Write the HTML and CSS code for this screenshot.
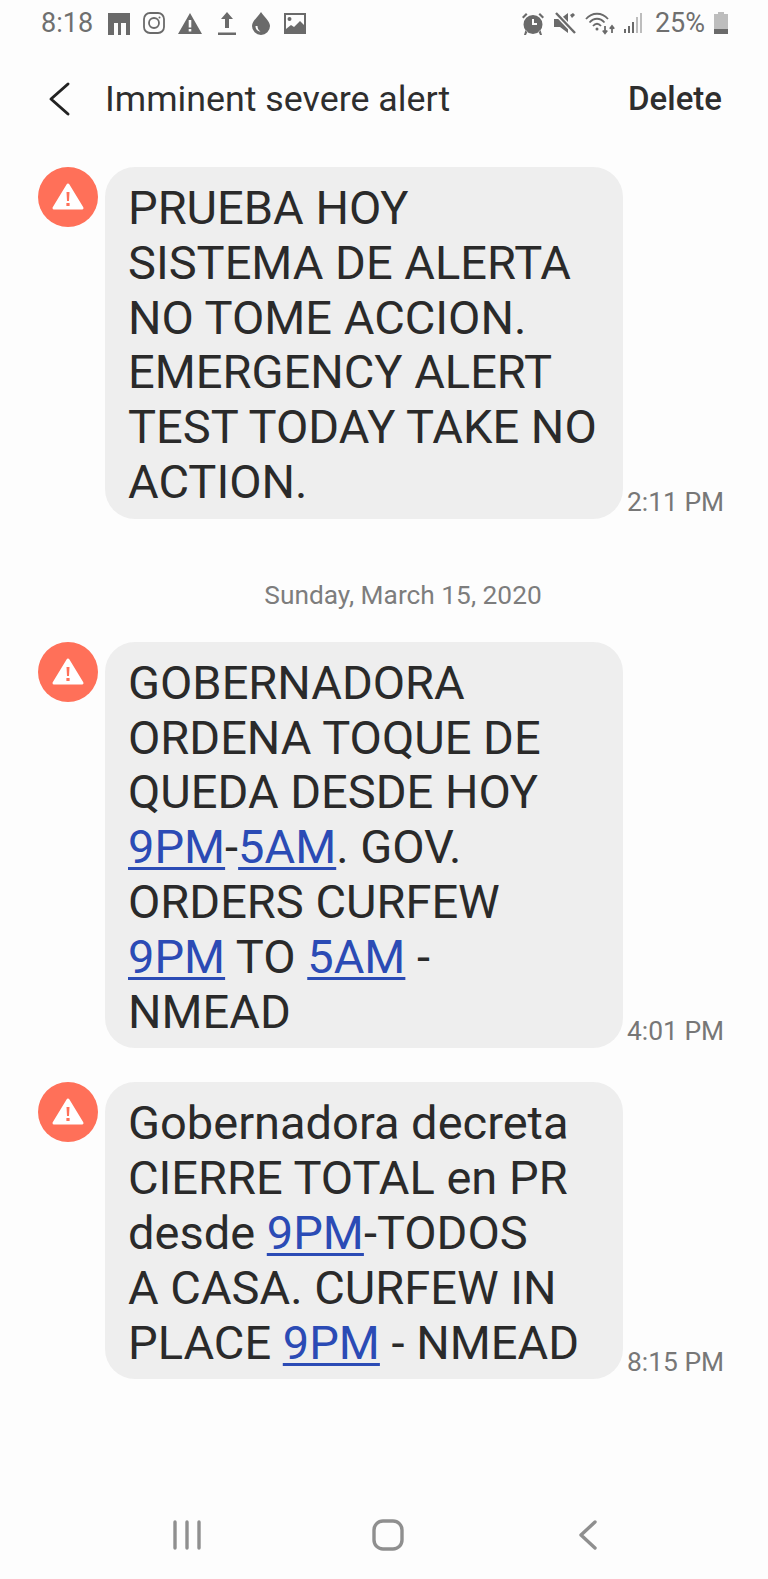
FILE: index.html
```html
<!DOCTYPE html>
<html lang="en">
<head>
<meta charset="utf-8">
<title>Imminent severe alert</title>
<link rel="stylesheet" href="styles.css">
</head>
<body>
<div class="screen">
  <div class="status">
    <div class="status-left">
      <span class="clock">8:18</span>
      <svg class="si" width="24" height="24" viewBox="0 0 24 24"><path class="f" fill-rule="evenodd" d="M2 2h22v22h-4V12h-5v12h-3V12H8v12H2z"/></svg>
      <svg class="si" width="22" height="24" viewBox="0 0 22 24" fill="none" stroke="#6a6a6a" stroke-width="1.800"><rect x="1" y="2" width="20" height="20" rx="6"/><circle cx="11" cy="12" r="5"/><circle cx="16.500" cy="6.500" r="1" fill="#6a6a6a" stroke="none"/></svg>
      <svg class="si" width="24" height="24" viewBox="0 0 24 24"><path class="f" fill-rule="evenodd" d="M12 2 24 23H0zM10.700 9v7.500h2.600V9zm0 9v2.500h2.600V18z"/></svg>
      <svg class="si" width="24" height="24" viewBox="0 0 24 24"><path class="f" d="M12 1l6 7h-4v9h-4V8H6zM3 21.500h18V24H3z"/></svg>
      <svg class="si" width="18" height="24" viewBox="0 0 18 24"><path class="f" fill-rule="evenodd" d="M9 1c3 5 9 9 9 14a9 9 0 0 1-18 0C0 10 6 6 9 1zM3.500 15c0 3 2 5.500 5 5.500-2-1-3-3-3-5.500z"/></svg>
      <svg class="si" width="24" height="24" viewBox="0 0 24 24"><path class="f" fill-rule="evenodd" d="M1 2h22v21H1zM6.500 6a2 2 0 1 0 0 4 2 2 0 0 0 0-4zM3 18l5-4 3 2 6-6 4 4V4H3z"/></svg>
    </div>
    <div class="status-right">
      <svg class="si" width="24" height="24" viewBox="0 0 24 24"><path class="f" fill-rule="evenodd" d="M12 4a9.500 9.500 0 1 1 0 19 9.500 9.500 0 0 1 0-19zM11 8v6h5v-2h-3V8zM1 6l4-4 1.500 1.500-4 4zM23 6l-4-4-1.500 1.500 4 4zM4.500 19l2 1.500L5 24H3zM19.500 19l-2 1.500L19 24h2z"/></svg>
      <svg class="si" width="24" height="24" viewBox="0 0 24 24"><path class="f" d="M1 8h6l8-6v20l-8-6H1z"/><path d="M3 2l19 20" stroke="#fdfdfd" stroke-width="5"/><path d="M3 2l19 20" stroke="#6a6a6a" stroke-width="2.400"/><path d="M17 4l3-2 2 2-3 3z" class="f"/></svg>
      <svg class="si wifi" width="30" height="24" viewBox="0 0 30 24" fill="none" stroke="#6a6a6a" stroke-width="1.800"><path d="M1 8C7 1 17 1 23 8M4.500 11.500c4.500-5 10.500-5 15 0M8 15c2.500-3 5.500-3 8 0"/><circle cx="12" cy="18" r="1.500" fill="#6a6a6a" stroke="none"/><path d="M20 15v7M17.800 19.500 20 22.300l2.200-2.800M27 22v-7M24.800 17.800 27 15l2.200 2.800"/></svg>
      <svg class="si" width="20" height="24" viewBox="0 0 20 24"><rect class="f" x="1" y="18" width="2" height="4"/><rect class="f" x="5" y="15" width="2" height="7"/><rect class="f" x="9" y="11" width="2" height="11"/><rect class="g" x="13" y="6" width="2" height="16"/><rect class="g" x="17" y="2" width="2" height="20"/></svg>
      <span class="pct">25%</span>
      <svg class="si" width="16" height="24" viewBox="0 0 16 24"><path class="g" d="M5 1h6v2h4v20H1V3h4z"/><path class="f" d="M1 18h14v5H1z"/></svg>
    </div>
  </div>

  <header class="topbar">
    <svg class="back" width="24" height="36" viewBox="0 0 24 36" fill="none" stroke="#222" stroke-width="3" stroke-linecap="round" stroke-linejoin="round"><path d="M20 3 3 18l17 15"/></svg>
    <h1 class="title">Imminent severe alert</h1>
    <span class="delete">Delete</span>
  </header>

  <main class="thread">
    <div class="msg msg-first">
      <span class="avatar"><svg width="34" height="30" viewBox="0 0 34 30"><path fill="#fff" stroke="#fff" stroke-width="3" stroke-linejoin="round" d="M17 3 31 26H3z"/><path fill="#ff7059" d="M15.500 10h3l-.5 9h-2zM15.400 21h3.200v3h-3.200z"/></svg></span>
      <div class="bubble">PRUEBA HOY<br>SISTEMA DE ALERTA<br>NO TOME ACCION.<br>EMERGENCY ALERT<br>TEST TODAY TAKE NO<br>ACTION.</div>
      <time class="stamp">2:11 PM</time>
    </div>

    <div class="date">Sunday, March 15, 2020</div>

    <div class="msg">
      <span class="avatar"><svg width="34" height="30" viewBox="0 0 34 30"><path fill="#fff" stroke="#fff" stroke-width="3" stroke-linejoin="round" d="M17 3 31 26H3z"/><path fill="#ff7059" d="M15.500 10h3l-.5 9h-2zM15.400 21h3.200v3h-3.200z"/></svg></span>
      <div class="bubble">GOBERNADORA<br>ORDENA TOQUE DE<br>QUEDA DESDE HOY<br><a class="link">9PM</a>-<a class="link">5AM</a>. GOV.<br>ORDERS CURFEW<br><a class="link">9PM</a> TO <a class="link">5AM</a> -<br>NMEAD</div>
      <time class="stamp">4:01 PM</time>
    </div>

    <div class="msg">
      <span class="avatar"><svg width="34" height="30" viewBox="0 0 34 30"><path fill="#fff" stroke="#fff" stroke-width="3" stroke-linejoin="round" d="M17 3 31 26H3z"/><path fill="#ff7059" d="M15.500 10h3l-.5 9h-2zM15.400 21h3.200v3h-3.200z"/></svg></span>
      <div class="bubble">Gobernadora decreta<br>CIERRE TOTAL en PR<br>desde <a class="link">9PM</a>-TODOS<br>A CASA. CURFEW IN<br>PLACE <a class="link">9PM</a> - NMEAD</div>
      <time class="stamp">8:15 PM</time>
    </div>
  </main>

  <nav class="navbar">
    <svg width="30" height="30" viewBox="0 0 30 30" fill="none" stroke="#8f8f8f" stroke-width="3.400" stroke-linecap="round"><path d="M3 2v26M15 2v26M27 2v26"/></svg>
    <svg width="32" height="32" viewBox="0 0 32 32" fill="none" stroke="#8f8f8f" stroke-width="3.400"><rect x="2" y="2" width="28" height="28" rx="9"/></svg>
    <svg width="24" height="32" viewBox="0 0 24 32" fill="none" stroke="#8f8f8f" stroke-width="3.400" stroke-linecap="round" stroke-linejoin="round"><path d="M21 3 7 16l14 13"/></svg>
  </nav>
</div>
</body>
</html>
```
FILE: styles.css
```css
* { box-sizing: border-box; }
html, body { margin: 0; padding: 0; }
body { background: #fdfdfd; font-family: Roboto, "Liberation Sans", sans-serif; color: #2a2a2a; }
.screen { width: 768px; height: 1579px; display: flex; flex-direction: column; overflow: hidden; }

.status { height: 46px; padding: 0 39px 0 41px; display: flex; justify-content: space-between; align-items: center; color: #6f6f6f; }
.status-left, .status-right { display: flex; align-items: center; }
.status-left { gap: 13px; }
.status-right { gap: 8px; }
.clock, .pct { font-size: 27px; line-height: 30px; }
.pct { margin-left: 4px; }
.si { display: block; flex: none; }
.f { fill: #6a6a6a; }
.g { fill: #bdbdbd; }

.topbar { height: 105px; padding: 0 46px 0 48px; display: flex; align-items: center; }
.back { flex: none; margin-right: 33px; }
.title { flex: 1; margin: 0; font-size: 35.800px; font-weight: 400; line-height: 40px; color: #2e2e2e; }
.delete { font-size: 33px; font-weight: 500; line-height: 40px; color: #2e2e2e; }

.thread { flex: 1; padding: 16px 0 0 38px; display: flex; flex-direction: column; }
.msg { display: flex; align-items: flex-end; margin-bottom: 34px; }
.msg-first { margin-bottom: 0; }
.avatar { width: 60px; height: 60px; border-radius: 50%; background: #ff7059; flex: none; align-self: flex-start; display: flex; align-items: center; justify-content: center; margin-right: 7px; }
.bubble { width: 518px; flex: none; padding: 14px 0 9px 23px; background: #eeeeee; border-radius: 30px; font-size: 47px; line-height: 54.800px; white-space: nowrap; color: #2a2a2a; }
.link { color: #2b4bb5; text-decoration: underline; text-decoration-thickness: 3px; text-underline-offset: 4px; }
.stamp { margin-left: 4px; margin-bottom: 2px; font-size: 26.400px; line-height: 30px; color: #777; white-space: nowrap; }
.date { margin: 61px 0 32px; padding-right: 0; text-align: center; font-size: 26.300px; line-height: 30px; color: #7d7d7d; }

.navbar { height: 88px; padding: 0 170px 0 172px; display: flex; align-items: center; justify-content: space-between; }
```
